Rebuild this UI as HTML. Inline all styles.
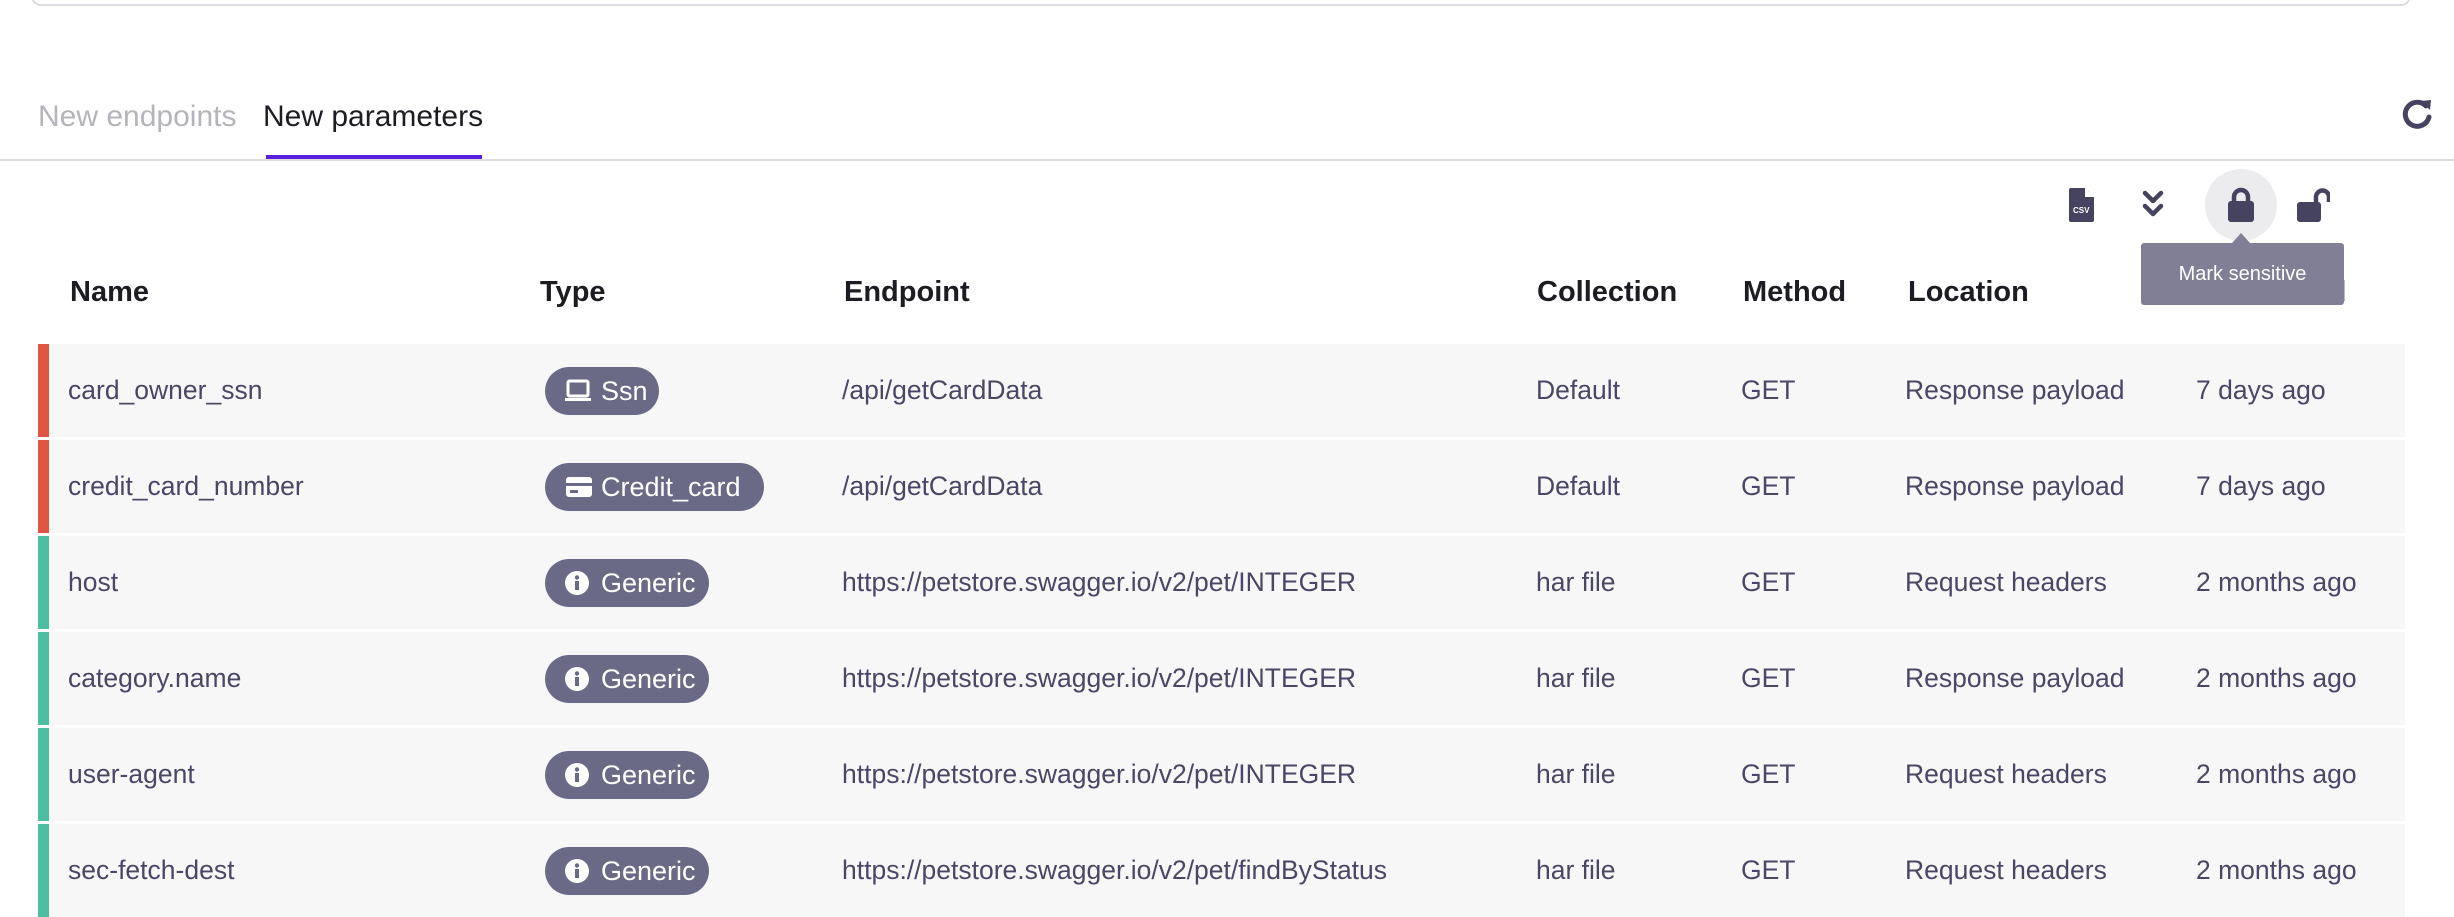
<!DOCTYPE html>
<html><head><meta charset="utf-8"><style>
*{margin:0;padding:0;box-sizing:border-box}
body{width:2454px;height:898px;overflow:hidden;background:#fff;font-family:"Liberation Sans",sans-serif;position:relative}
.abs{position:absolute}
.topbox{left:31px;top:-20px;width:2380px;height:26px;border:2px solid #dcdce2;border-top:none;border-radius:0 0 10px 10px}
.tab{top:100px;font-size:30px;white-space:nowrap}
.hline{left:0;top:159px;width:2454px;height:2px;background:#dcdce2}
.th{top:276px;font-size:29px;font-weight:bold;color:#1c1c22;white-space:nowrap}
.row{left:38px;width:2367px;height:93px;background:#f7f7f8}
.bar{position:absolute;left:0;top:0;width:11px;height:93px}
.cell{position:absolute;top:0;line-height:93px;font-size:26.5px;color:#4a4766;white-space:nowrap}
.chip{position:absolute;top:23px;height:48px;border-radius:24px;background:#6b6a86;color:#fff;font-size:27px;line-height:48px;padding-left:56px;white-space:nowrap}
.chip svg{position:absolute;left:20px;top:12px}
</style></head><body>
<div class="abs topbox"></div>
<div class="abs tab" style="left:38px;color:#b4b4ba">New endpoints</div>
<div class="abs tab" style="left:263px;color:#1c1c22">New parameters</div>
<div class="abs" style="left:266px;top:155px;width:216px;height:5px;background:#5a1fdc"></div>
<div class="abs hline"></div>
<svg class="abs" style="left:2402px;top:97px" width="32" height="34" viewBox="0 0 32 34"><path d="M24 9 A12 12 0 1 0 27 20" fill="none" stroke="#45435f" stroke-width="5" stroke-linecap="round"/><path d="M19 4 L29 3 L28 13 Z" fill="#45435f"/></svg>

<svg class="abs" style="left:2069px;top:188px" width="25" height="34" viewBox="0 0 25 34"><path d="M0 2 Q0 0 2 0 H16 L25 9 V32 Q25 34 23 34 H2 Q0 34 0 32Z" fill="#45435f"/><path d="M16 0 V9 H25" fill="#fff"/><path d="M17 0 V8 H25" fill="none" stroke="#fff" stroke-width="1.5"/><text x="4" y="25" font-size="8" fill="#fff" font-family="Liberation Sans" font-weight="bold">CSV</text></svg>
<svg class="abs" style="left:2141px;top:190px" width="24" height="30" viewBox="0 0 24 30"><path d="M4 3 L12 11 L20 3 M4 16 L12 24 L20 16" fill="none" stroke="#45435f" stroke-width="4.5" stroke-linecap="round" stroke-linejoin="round"/></svg>
<div class="abs" style="left:2205px;top:169px;width:72px;height:72px;border-radius:50%;background:#ececef"></div>
<svg class="abs" style="left:2227px;top:187px" width="28" height="36" viewBox="0 0 28 36"><path d="M7 15 V10 A7 7 0 0 1 21 10 V15" fill="none" stroke="#45435f" stroke-width="4.5"/><rect x="1" y="14" width="26" height="21" rx="3" fill="#45435f"/></svg>
<svg class="abs" style="left:2296px;top:188px" width="34" height="36" viewBox="0 0 34 36"><path d="M20 15 V9 A6.5 6.5 0 0 1 33 9 V14" fill="none" stroke="#45435f" stroke-width="4.5"/><rect x="1" y="14" width="24" height="20" rx="3" fill="#45435f"/></svg>

<div class="abs th" style="left:70px">Name</div>
<div class="abs th" style="left:540px">Type</div>
<div class="abs th" style="left:844px">Endpoint</div>
<div class="abs th" style="left:1537px">Collection</div>
<div class="abs th" style="left:1743px">Method</div>
<div class="abs th" style="left:1908px">Location</div>
<div class="abs th" style="left:2190px">Discovered</div>

<div class="abs" style="left:2232px;top:233px;width:0;height:0;border-left:9px solid transparent;border-right:9px solid transparent;border-bottom:10px solid #807f95"></div>
<div class="abs" style="left:2141px;top:243px;width:203px;height:62px;background:#807f95;border-radius:3px;color:#fff;font-size:20px;line-height:62px;text-align:center">Mark sensitive</div>

<div class="abs row" style="top:344px"><div class="bar" style="background:#e05643"></div>
<div class="cell" style="left:30px">card_owner_ssn</div>
<div class="chip" style="left:507px;width:114px"><svg width="26" height="24" viewBox="0 0 26 24"><rect x="3" y="2" width="20" height="15" rx="1.5" fill="none" stroke="#fff" stroke-width="3"/><rect x="0" y="19" width="26" height="3" fill="#fff"/></svg>Ssn</div>
<div class="cell" style="left:804px">/api/getCardData</div><div class="cell" style="left:1498px">Default</div><div class="cell" style="left:1703px">GET</div><div class="cell" style="left:1867px">Response payload</div><div class="cell" style="left:2158px">7 days ago</div></div>

<div class="abs row" style="top:440px"><div class="bar" style="background:#e05643"></div>
<div class="cell" style="left:30px">credit_card_number</div>
<div class="chip" style="left:507px;width:219px"><svg width="28" height="24" viewBox="0 0 28 24"><rect x="1" y="2" width="26" height="20" rx="3" fill="#fff"/><rect x="1" y="8" width="26" height="3" fill="#6b6a86"/><rect x="5" y="15" width="8" height="3" fill="#6b6a86"/></svg>Credit_card</div>
<div class="cell" style="left:804px">/api/getCardData</div><div class="cell" style="left:1498px">Default</div><div class="cell" style="left:1703px">GET</div><div class="cell" style="left:1867px">Response payload</div><div class="cell" style="left:2158px">7 days ago</div></div>

<div class="abs row" style="top:536px"><div class="bar" style="background:#4cbfa0"></div>
<div class="cell" style="left:30px">host</div>
<div class="chip" style="left:507px;width:164px"><svg width="24" height="24" viewBox="0 0 24 24"><circle cx="12" cy="12" r="12" fill="#fff"/><rect x="10" y="10" width="4" height="9" fill="#6b6a86"/><circle cx="12" cy="6.5" r="2.2" fill="#6b6a86"/></svg>Generic</div>
<div class="cell" style="left:804px">https://petstore.swagger.io/v2/pet/INTEGER</div><div class="cell" style="left:1498px">har file</div><div class="cell" style="left:1703px">GET</div><div class="cell" style="left:1867px">Request headers</div><div class="cell" style="left:2158px">2 months ago</div></div>

<div class="abs row" style="top:632px"><div class="bar" style="background:#4cbfa0"></div>
<div class="cell" style="left:30px">category.name</div>
<div class="chip" style="left:507px;width:164px"><svg width="24" height="24" viewBox="0 0 24 24"><circle cx="12" cy="12" r="12" fill="#fff"/><rect x="10" y="10" width="4" height="9" fill="#6b6a86"/><circle cx="12" cy="6.5" r="2.2" fill="#6b6a86"/></svg>Generic</div>
<div class="cell" style="left:804px">https://petstore.swagger.io/v2/pet/INTEGER</div><div class="cell" style="left:1498px">har file</div><div class="cell" style="left:1703px">GET</div><div class="cell" style="left:1867px">Response payload</div><div class="cell" style="left:2158px">2 months ago</div></div>

<div class="abs row" style="top:728px"><div class="bar" style="background:#4cbfa0"></div>
<div class="cell" style="left:30px">user-agent</div>
<div class="chip" style="left:507px;width:164px"><svg width="24" height="24" viewBox="0 0 24 24"><circle cx="12" cy="12" r="12" fill="#fff"/><rect x="10" y="10" width="4" height="9" fill="#6b6a86"/><circle cx="12" cy="6.5" r="2.2" fill="#6b6a86"/></svg>Generic</div>
<div class="cell" style="left:804px">https://petstore.swagger.io/v2/pet/INTEGER</div><div class="cell" style="left:1498px">har file</div><div class="cell" style="left:1703px">GET</div><div class="cell" style="left:1867px">Request headers</div><div class="cell" style="left:2158px">2 months ago</div></div>

<div class="abs row" style="top:824px"><div class="bar" style="background:#4cbfa0"></div>
<div class="cell" style="left:30px">sec-fetch-dest</div>
<div class="chip" style="left:507px;width:164px"><svg width="24" height="24" viewBox="0 0 24 24"><circle cx="12" cy="12" r="12" fill="#fff"/><rect x="10" y="10" width="4" height="9" fill="#6b6a86"/><circle cx="12" cy="6.5" r="2.2" fill="#6b6a86"/></svg>Generic</div>
<div class="cell" style="left:804px">https://petstore.swagger.io/v2/pet/findByStatus</div><div class="cell" style="left:1498px">har file</div><div class="cell" style="left:1703px">GET</div><div class="cell" style="left:1867px">Request headers</div><div class="cell" style="left:2158px">2 months ago</div></div>
</body></html>
